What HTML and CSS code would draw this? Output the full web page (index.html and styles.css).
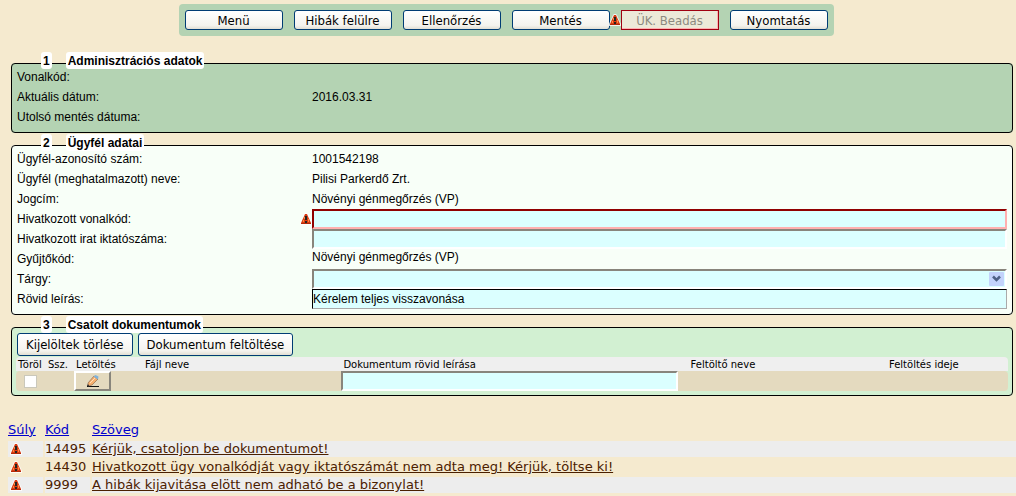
FILE: index.html
```
<!DOCTYPE html>
<html lang="hu">
<head>
<meta charset="utf-8">
<title>Csatolt dokumentumok</title>
<link rel="stylesheet" href="styles.css">
</head>
<body>
<svg class="sprite" aria-hidden="true">
  <symbol id="warn" viewBox="0 0 12 12">
    <path d="M5 0h2l1 1 4 9v2H0v-2l4-9z" fill="#fff" opacity=".8"/>
    <path d="M5 1h2l4 9v1H1v-1z" fill="#d93a12"/>
    <path d="M4 4h1v2H4zM3 7h1v2H3zM8 6h1v3H8z" fill="#ff8a3c"/>
    <path d="M1 10h10v1H1z" fill="#b52a08"/>
    <path d="M5 3h2v4H5zM5 8h2v2H5z" fill="#26231f"/>
  </symbol>
</svg>
<header class="top">
  <nav class="toolbar">
    <button class="btn" type="button">Menü</button>
    <button class="btn" type="button">Hibák felülre</button>
    <button class="btn" type="button">Ellenőrzés</button>
    <button class="btn" type="button">Mentés</button>
    <span class="marked">
      <svg class="warn warn--before"><use href="#warn"/></svg>
      <button class="btn btn--error" type="button" disabled>ÜK. Beadás</button>
    </span>
    <button class="btn" type="button">Nyomtatás</button>
  </nav>
</header>

<main class="sections">
  <fieldset class="section section--admin">
    <legend class="legend"><span class="chip">1</span><span class="chip">Adminisztrációs adatok</span></legend>
    <div class="row"><span>Vonalkód:</span></div>
    <div class="row"><span>Aktuális dátum:</span><span>2016.03.31</span></div>
    <div class="row"><span>Utolsó mentés dátuma:</span></div>
  </fieldset>

  <fieldset class="section section--client">
    <legend class="legend"><span class="chip">2</span><span class="chip">Ügyfél adatai</span></legend>
    <div class="row"><span>Ügyfél-azonosító szám:</span><span>1001542198</span></div>
    <div class="row"><span>Ügyfél (meghatalmazott) neve:</span><span>Pilisi Parkerdő Zrt.</span></div>
    <div class="row"><span>Jogcím:</span><span>Növényi génmegőrzés (VP)</span></div>
    <div class="row">
      <label for="barcode">Hivatkozott vonalkód:</label>
      <span class="marked">
        <svg class="warn warn--before"><use href="#warn"/></svg>
        <input class="input input--error" id="barcode" type="text">
      </span>
    </div>
    <div class="row">
      <label for="docket">Hivatkozott irat iktatószáma:</label>
      <input class="input" id="docket" type="text">
    </div>
    <div class="row"><span>Gyűjtőkód:</span><span class="value--high">Növényi génmegőrzés (VP)</span></div>
    <div class="row">
      <label for="subject">Tárgy:</label>
      <span class="marked">
        <select class="input" id="subject"><option></option></select>
        <svg class="arrow" viewBox="0 0 15 14" aria-hidden="true"><rect width="15" height="14" rx="1" fill="#c3d3fb"/><path d="M4 4.500l3.500 3.500 3.500-3.500" fill="none" stroke="#4d6185" stroke-width="2.500"/></svg>
      </span>
    </div>
    <div class="row">
      <label for="summary">Rövid leírás:</label>
      <input class="input input--flat" id="summary" type="text" value="Kérelem teljes visszavonása">
    </div>
  </fieldset>

  <fieldset class="section section--docs">
    <legend class="legend"><span class="chip">3</span><span class="chip">Csatolt dokumentumok</span></legend>
    <div class="actions">
      <button class="btn btn--large" type="button">Kijelöltek törlése</button>
      <button class="btn btn--large" type="button">Dokumentum feltöltése</button>
    </div>
    <table class="docs">
      <colgroup><col class="c-del"><col class="c-num"><col class="c-get"><col class="c-fifth"><col class="c-desc"><col class="c-fifth"><col></colgroup>
      <thead>
        <tr><th>Töröl</th><th>Ssz.</th><th>Letöltés</th><th>Fájl neve</th><th>Dokumentum rövid leírása</th><th>Feltöltő neve</th><th>Feltöltés ideje</th></tr>
      </thead>
      <tbody>
        <tr>
          <td><input class="tick" type="checkbox" aria-label="Töröl"></td>
          <td></td>
          <td><button class="edit" type="button" aria-label="Letöltés"><svg width="14" height="14" viewBox="0 0 14 14"><path d="M1 12.500h12" stroke="#111"/><path d="M2 9l6-7 4 3-6 6-4 1z" fill="#f7b06e" stroke="#7d5a43" stroke-width=".6"/><path d="M7.500 2.500l2-1.500 3 1.500-.5 3z" fill="#7fb2da"/><path d="M4 9l5-5" stroke="#ffe1bd"/><path d="M2 10l1 2-2 0z" fill="#222"/></svg></button></td>
          <td></td>
          <td><input class="input input--desc" type="text" aria-label="Dokumentum rövid leírása"></td>
          <td></td>
          <td></td>
        </tr>
      </tbody>
    </table>
  </fieldset>
</main>

<table class="errors">
  <colgroup><col class="e-weight"><col class="e-code"><col></colgroup>
  <thead>
    <tr><th><a href="#suly">Súly</a></th><th><a href="#kod">Kód</a></th><th><a href="#szoveg">Szöveg</a></th></tr>
  </thead>
  <tbody>
    <tr><td><svg class="warn"><use href="#warn"/></svg></td><td>14495</td><td><a href="#e14495">Kérjük, csatoljon be dokumentumot!</a></td></tr>
    <tr><td><svg class="warn"><use href="#warn"/></svg></td><td>14430</td><td><a href="#e14430">Hivatkozott ügy vonalkódját vagy iktatószámát nem adta meg! Kérjük, töltse ki!</a></td></tr>
    <tr><td><svg class="warn"><use href="#warn"/></svg></td><td>9999</td><td><a href="#e9999">A hibák kijavitása elött nem adható be a bizonylat!</a></td></tr>
  </tbody>
</table>
</body>
</html>
```
FILE: styles.css
```
* { box-sizing: border-box; }
body {
  margin: 0;
  background: #f5eacf;
  color: #000;
  font: 12px "Liberation Sans", Arial, sans-serif;
}
.sprite { position: absolute; width: 0; height: 0; }

/* Buttons */
.top {
  display: flex;
  justify-content: center;
  padding: 4px 4px 0 0;
}
.toolbar {
  display: flex;
  gap: 11px;
  padding: 6px;
  border-radius: 4px;
  background: #b4d3b3;
}
.btn {
  width: 98px;
  height: 20px;
  padding: 0;
  border: 1px solid #003c74;
  border-radius: 3px;
  background: linear-gradient(#fff, #f4f3ee 80%, #e2dfd4);
  color: #000;
  font: 13px "DejaVu Sans Condensed", "DejaVu Sans", Tahoma, sans-serif;
  white-space: nowrap;
}
.btn--error {
  border: 1px solid #a00010;
  border-radius: 0;
  background: #ece9d8;
  box-shadow: inset -1px -1px #ffb0b0;
  color: #8c8a80;
}
.btn--large { width: auto; height: 23px; padding: 0 8px; }
.marked { position: relative; display: block; }
.warn { display: block; width: 12px; height: 12px; }
.warn--before { position: absolute; left: -12px; top: 4px; }

/* Sections */
.sections {
  display: flex;
  flex-direction: column;
  gap: 12px;
  margin: 27px 3px 0 11px;
}
.section {
  position: relative;
  min-width: 0;
  margin: 0;
  padding: 3px 5px 5px;
  border: 1px solid #000;
  border-radius: 4px;
}
.section--admin { background: #b4d3b3; }
.section--client { background: #f8fff8; }
.section--docs { padding: 5px 4px 4px; background: #d2f0d2; }
.legend {
  position: absolute;
  top: -12px;
  left: 29px;
  display: flex;
  gap: 14px;
  padding: 0;
}
.chip {
  padding: 1px 2px 0;
  border-radius: 3px;
  background: #fff;
  font-weight: bold;
  line-height: 16px;
}
.row {
  display: grid;
  grid-template-columns: 295px 1fr;
  height: 20px;
  line-height: 20px;
}
.value--high { line-height: 16px; }

/* Fields */
.input {
  display: block;
  width: 100%;
  height: 20px;
  padding: 0;
  border: 2px solid;
  border-color: #88857c #fff #fff #88857c;
  border-radius: 0;
  background: #dbffff;
  color: #000;
  font: inherit;
  appearance: none;
}
.input--error { border-color: #900000 #ffb0b0 #ffb0b0 #900000; }
.input--flat { border-width: 1px; border-color: #000 #aaa #aaa #000; }
.arrow { position: absolute; top: 3px; right: 3px; width: 15px; height: 14px; }

/* Attached documents */
.actions { display: flex; gap: 5px; padding: 0 1px 1px; }
.docs {
  width: 100%;
  table-layout: fixed;
  border-collapse: separate;
  border-spacing: 0;
}
.docs th {
  height: 14px;
  padding: 2px 2px 0;
  background: #efefef;
  font: 10px/12px "DejaVu Sans", Verdana, sans-serif;
  text-align: left;
  white-space: nowrap;
}
.docs td { height: 20px; padding: 0; background: #e4dabf; }
.docs th:first-child { border-top-left-radius: 4px; }
.docs th:last-child { border-top-right-radius: 4px; }
.docs td:first-child { border-radius: 4px 0 0 4px; }
.docs td:last-child { border-radius: 0 4px 4px 0; }
.c-del { width: 30px; }
.c-num { width: 28px; }
.c-get { width: 69px; }
.c-fifth { width: 20%; }
.c-desc { width: 35%; }
.input--desc { width: 97%; }
.tick {
  display: block;
  width: 13px;
  height: 13px;
  margin: 0 8px;
  border: 1px solid #cac8bb;
  background: #fff;
  appearance: none;
}
.edit {
  display: flex;
  align-items: center;
  justify-content: center;
  width: 37px;
  height: 20px;
  padding: 0;
  border: 2px solid;
  border-color: #fff #88857c #88857c #fff;
  background: #e4dabf;
}

/* Error list */
.errors {
  width: calc(100% - 4px);
  margin: 22px 0 0 6px;
  table-layout: fixed;
  border-collapse: separate;
  border-spacing: 2px;
  color: #4b2000;
  font: 13px/16px "DejaVu Sans", Verdana, sans-serif;
}
.errors th { height: 19px; padding: 0; font-weight: normal; text-align: left; }
.errors th a { color: #00c; }
.errors td { height: 16px; padding: 0; white-space: nowrap; }
.errors td a { color: inherit; }
.errors tbody tr:nth-child(odd) td { background: #ededed; }
.errors .warn { margin-left: 2px; }
.e-weight { width: 35px; }
.e-code { width: 45px; }
```
